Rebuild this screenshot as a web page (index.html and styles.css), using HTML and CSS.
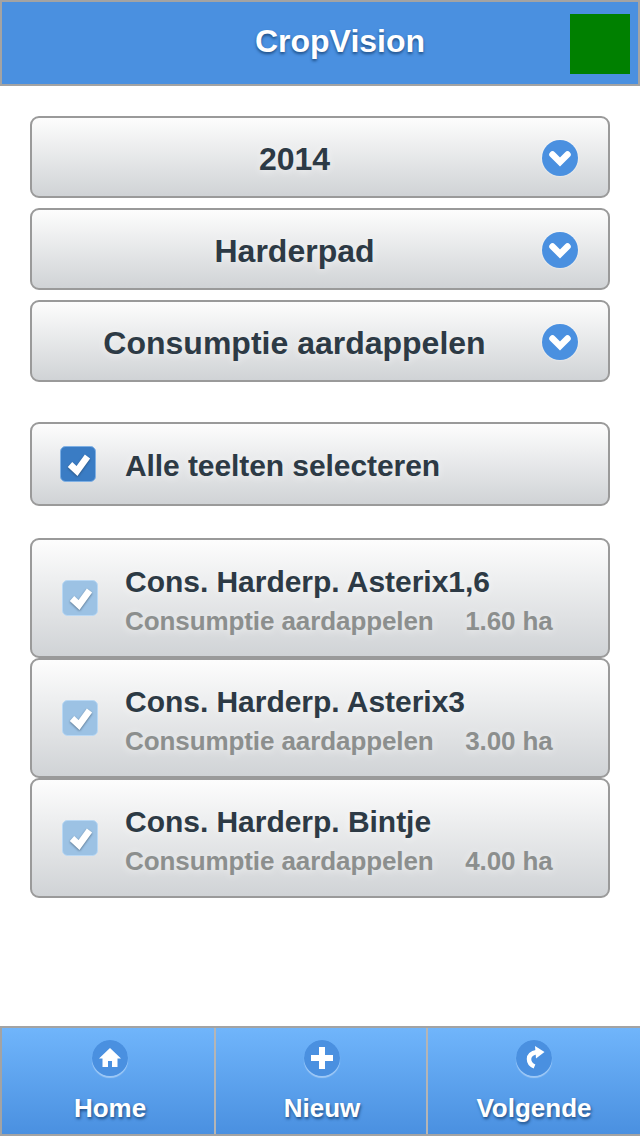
FILE: index.html
```html
<!DOCTYPE html>
<html lang="nl">
<head>
<meta charset="utf-8">
<title>CropVision</title>
<link rel="stylesheet" href="styles.css">
</head>
<body>
<div class="page">
  <header class="header">
    <h1 class="title">CropVision</h1>
    <div class="square"></div>
  </header>
  <main class="main">
    <div class="selects">
      <div class="btn select"><span class="select-text">2014</span>
        <svg class="badge" viewBox="0 0 36 36"><circle cx="18" cy="18" r="18" fill="#4a90e0"/><path d="M10.500 14.500l7.500 7.500 7.500-7.500" fill="none" stroke="#fff" stroke-width="6.500" stroke-linecap="round"/></svg></div>
      <div class="btn select"><span class="select-text">Harderpad</span>
        <svg class="badge" viewBox="0 0 36 36"><circle cx="18" cy="18" r="18" fill="#4a90e0"/><path d="M10.500 14.500l7.500 7.500 7.500-7.500" fill="none" stroke="#fff" stroke-width="6.500" stroke-linecap="round"/></svg></div>
      <div class="btn select"><span class="select-text">Consumptie aardappelen</span>
        <svg class="badge" viewBox="0 0 36 36"><circle cx="18" cy="18" r="18" fill="#4a90e0"/><path d="M10.500 14.500l7.500 7.500 7.500-7.500" fill="none" stroke="#fff" stroke-width="6.500" stroke-linecap="round"/></svg></div>
    </div>
    <div class="btn all">
      <svg class="check" viewBox="0 0 36 36"><rect x="0.500" y="0.500" width="35" height="35" rx="5" fill="#3a7cc4" stroke="#7fb0e4"/><path class="tick" d="M10 18.500l7 6.500L27.500 10.500" fill="none" stroke="#fff" stroke-width="6.500"/></svg>
      <span class="all-text">Alle teelten selecteren</span>
    </div>
    <div class="list">
      <div class="btn item">
        <svg class="check" viewBox="0 0 36 36"><rect x="0.500" y="0.500" width="35" height="35" rx="5" fill="#9cc2e4" stroke="#b9d8f4"/><path class="tick" d="M10 18.500l7 6.500L27.500 10.500" fill="none" stroke="#fff" stroke-width="6.500"/></svg>
        <div class="item-body"><div class="item-title">Cons. Harderp. Asterix1,6</div><div class="item-sub"><span>Consumptie aardappelen</span><span>1.60 ha</span></div></div>
      </div>
      <div class="btn item">
        <svg class="check" viewBox="0 0 36 36"><rect x="0.500" y="0.500" width="35" height="35" rx="5" fill="#9cc2e4" stroke="#b9d8f4"/><path class="tick" d="M10 18.500l7 6.500L27.500 10.500" fill="none" stroke="#fff" stroke-width="6.500"/></svg>
        <div class="item-body"><div class="item-title">Cons. Harderp. Asterix3</div><div class="item-sub"><span>Consumptie aardappelen</span><span>3.00 ha</span></div></div>
      </div>
      <div class="btn item">
        <svg class="check" viewBox="0 0 36 36"><rect x="0.500" y="0.500" width="35" height="35" rx="5" fill="#9cc2e4" stroke="#b9d8f4"/><path class="tick" d="M10 18.500l7 6.500L27.500 10.500" fill="none" stroke="#fff" stroke-width="6.500"/></svg>
        <div class="item-body"><div class="item-title">Cons. Harderp. Bintje</div><div class="item-sub"><span>Consumptie aardappelen</span><span>4.00 ha</span></div></div>
      </div>
    </div>
  </main>
  <footer class="footer">
    <div class="tab">
      <svg class="tab-icon" viewBox="0 0 36 36"><circle cx="18" cy="18" r="18" fill="#4a90e0"/><path d="M18 8L7 18.500h3.500V27h5.500v-6h4v6h5.500v-8.500H29z" fill="#fff"/></svg>
      <span class="tab-label">Home</span>
    </div>
    <div class="tab">
      <svg class="tab-icon" viewBox="0 0 36 36"><circle cx="18" cy="18" r="18" fill="#4a90e0"/><path d="M18 7v22M7 18h22" fill="none" stroke="#fff" stroke-width="6"/></svg>
      <span class="tab-label">Nieuw</span>
    </div>
    <div class="tab">
      <svg class="tab-icon" viewBox="0 0 36 36"><circle cx="18" cy="18" r="18" fill="#4a90e0"/><path d="M21 12c-5 1-8 3.500-8 7 0 3.500 2 6 5.500 7.500" fill="none" stroke="#fff" stroke-width="4.500"/><path d="M19 6l9.500 6-8.500 6.500z" fill="#fff"/></svg>
      <span class="tab-label">Volgende</span>
    </div>
  </footer>
</div>
</body>
</html>
```
FILE: styles.css
```css
* { box-sizing: border-box; }
html, body { margin: 0; padding: 0; }
body { font-family: "Liberation Sans", Arial, sans-serif; font-weight: bold; background: #fff; }
.page { width: 640px; height: 1136px; display: flex; flex-direction: column; overflow: hidden; }

.header {
  height: 86px; flex: none; display: flex; align-items: center; justify-content: center; position: relative;
  padding: 0 0 4px 40px;
  background: #4a90e0; border: 2px solid #a3a3a3;
}
.title { margin: 0; font-size: 32px; line-height: 36px; color: #fff; text-shadow: 0 2px 3px #1f4f86; }
.square { position: absolute; left: 568px; top: 12px; width: 60px; height: 60px; background: #008000; }

.main { flex: 1; padding: 30px 30px 0; display: flex; flex-direction: column; }
.btn {
  border: 2px solid #9a9a9a; border-radius: 9px; color: #2d3a45;
  background: linear-gradient(#fdfdfd, #d0d3d6); text-shadow: 0 1px 8px rgba(255,255,255,.6);
  display: flex; align-items: center;
}
.selects { display: flex; flex-direction: column; gap: 10px; }
.select { height: 82px; padding: 2px 30px 0 32px; font-size: 32px; }
.select-text { flex: 1; text-align: center; padding-top: 2px; margin-right: 17px; }
.badge { width: 36px; height: 36px; flex: none; filter: drop-shadow(0 0 1px rgba(255,255,255,.7)); }

.all { height: 84px; margin-top: 40px; padding: 0 12px 0 28px; gap: 29px; font-size: 30px; letter-spacing: -0.08px; }
.all-text { padding-top: 4px; }
.check { width: 36px; height: 36px; flex: none; }
.tick { filter: drop-shadow(0 1px 1px rgba(30,50,70,.55)); }
.list { margin-top: 32px; display: flex; flex-direction: column; }
.item { height: 120px; padding: 0 12px 0 30px; gap: 27px; }
.item-title { font-size: 30px; line-height: 36px; white-space: nowrap; letter-spacing: -0.03px; }
.item-sub { margin-top: 6px; font-size: 26px; line-height: 30px; color: #8c8f8e; display: flex; gap: 31.500px; white-space: nowrap; letter-spacing: -0.09px; }
.item-body { padding-top: 4px; }

.footer {
  height: 110px; flex: none; display: grid; grid-template-columns: 214px 212px 212px;
  border-top: 2px solid #a3a3a3; border-bottom: 2px solid #a3a3a3; border-left: 2px solid #a3a3a3;
  background: linear-gradient(#70b5fb, #4a90e0);
}
.tab { display: flex; flex-direction: column; align-items: center; padding: 12px 0 0 2px; border-right: 2px solid #b5b5b5; }
.tab:first-child { padding-left: 4px; }
.tab:last-child { border-right: 0; padding-left: 0; }
.tab-icon { width: 36px; height: 36px; border-radius: 50%; box-shadow: 0 2px 1px rgba(255,255,255,.4); }
.tab-label { margin-top: 16px; font-size: 26px; line-height: 32px; color: #fff; text-shadow: 1px 2px 3px #1f4f86; }
```
